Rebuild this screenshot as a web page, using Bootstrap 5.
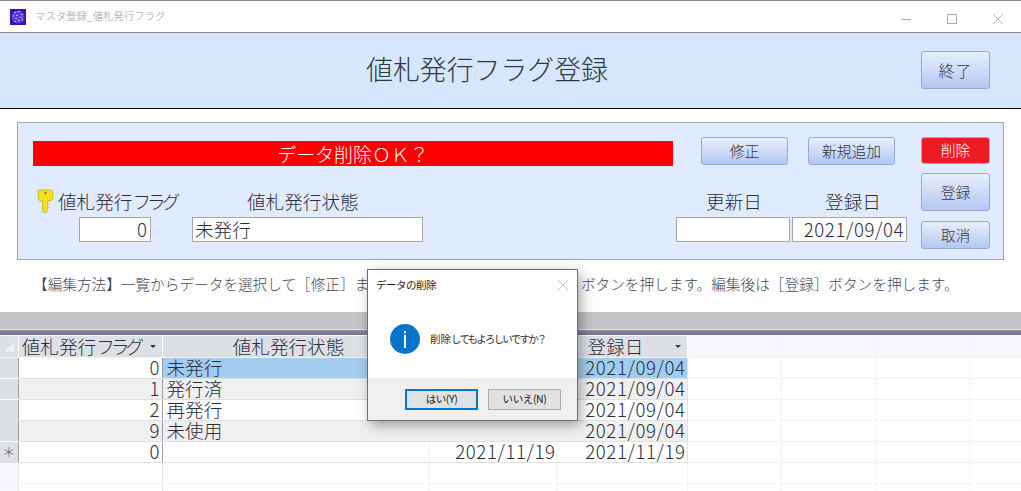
<!DOCTYPE html>
<html lang="ja">
<head>
  <meta charset="utf-8">
  <title>マスタ登録_値札発行フラグ</title>
  <link href="https://cdn.jsdelivr.net/npm/bootstrap@5.3.0/dist/css/bootstrap.min.css" rel="stylesheet">
  <style>
    html, body { height: 491px; overflow: hidden; }
    body { font-family: "Noto Sans CJK JP", "Liberation Sans", sans-serif; font-weight: 300; color: #2b2d3a; background: #fff; position: relative; }

    /* window title bar */
    .win-bar { height: 33px; border-top: 1px solid #8a8a8a; border-bottom: 1px solid #8a8a8a; padding-left: 10px; }
    .win-title { font-size: 10.4px; color: #9a9a9a; margin-left: 9px; line-height: 1; }
    .win-ctrl { width: 46px; }

    /* form header */
    .form-head { height: 76px; background: #d5e6fd; border-bottom: 1px solid #000; padding: 18px 31px 0 0; }
    .form-title { font-size: 26.9px; line-height: 36px; margin-left: 366px; width: 555px; color: #333641; }

    .acc-btn { background: linear-gradient(#e9eefb, #b4c8f3); border: 1px solid #8fa9dc; border-radius: 3px; color: #33353f; font-size: 14.8px; font-weight: 300; padding: 0; line-height: 1; width: 69px; display: flex; align-items: center; justify-content: center; }
    .acc-btn-wide { width: 87px; height: 28px; }
    .acc-btn-next { margin-left: 20px; }
    .acc-btn-danger { background: #ed1c24; border-color: #c9a0b0; color: #fff; height: 27px; }
    .btn-tall { height: 38px; }
    .btn-low { height: 28px; }
    .exit-btn { font-size: 16px; letter-spacing: 1px; }

    /* edit panel */
    .edit-panel { margin: 13px 0 0 17px; width: 987px; height: 138px; background: #e0ecfd; border: 1px solid #a6a6a6; padding: 14px 0 0 15px; }
    .edit-main { width: 874px; }
    .msg-bar { width: 640px; height: 25px; margin: 4px 28px 0 0; background: #f00; color: #fff; font-size: 18.9px; line-height: 25px; text-align: center; }
    .btn-col { width: 69px; margin-left: 14px; gap: 9px; }
    .btn-col .btn-low { margin-top: 1px; }
    .fld-row { margin-top: 23px; }
    .fld-label { font-size: 18.6px; line-height: 24px; white-space: nowrap; }
    .fld-box { height: 25px; background: #fff; border: 1px solid #a6a6a6; font-size: 18.6px; line-height: 22px; padding: 0 2px; margin-top: 4px; }
    .key-cell { width: 118px; }
    .key-icon { margin-left: 3px; }
    .key-box { width: 72px; padding-right: 3px; }
    .status-cell { width: 231px; margin: 0 253px 0 41px; }
    .status-label { margin-left: 55px; }
    .date-cell { width: 114px; }
    .date-cell-last { width: 115px; margin-left: 2px; }
    .upd-label { padding-left: 2px; }
    .reg-label { padding-left: 7px; }
    .kana-tight { letter-spacing: -3.900px; }
    .dt { letter-spacing: .6px; }

    .help-line { margin: 9px 0 0 33px; font-size: 14.65px; line-height: 30px; white-space: nowrap; color: #3f4a55; }
    .help-tight { letter-spacing: -.5px; }

    /* gray band above the datasheet */
    .sheet-band { margin-top: 13px; height: 18px; background: #c3c4c8; border-bottom: 1px solid #e8e8ea; }
    .sheet-rule { height: 6px; background: linear-gradient(#8f8aa8, #76708f); border-bottom: 1px solid #fff; }

    /* datasheet */
    .dsheet { table-layout: fixed; border-collapse: collapse; width: 1021px; font-size: 18.6px; }
    .dsheet th, .dsheet td { height: 21px; padding: 0 2px; line-height: 20px; white-space: nowrap; font-weight: 300; border-right: 1px solid #f2f3f6; border-bottom: 1px solid #f2f3f6; }
    .dsheet td { line-height: 18px; padding-bottom: 2px; }
    .dsheet td.txt { padding-left: 4px; }
    .dsheet td.dt { padding-right: 1px; }
    .dsheet thead th { background: #f5f6fe; }
    .dsheet thead th.hd { background: #dde1e6; border-right: 1px solid #fff; text-align: center; position: relative; }
    .dsheet td.sel { background: #dde1e6; border-right: 1px solid #9a9ea6; border-bottom-color: #fff; padding: 0; text-align: center; font-size: 13px; color: #666; }
    .dsheet .row-alt td { background: #f0f0f0; border-bottom-color: #e0e0e0; }
    .dsheet .row-cur td { background: #a3cdf0; border-bottom-color: #e0e0e0; }
    .dsheet .row-plain td { border-bottom-color: #e0e0e0; }
    .dsheet .row-cur td.key-cur { background: #fff; }
    .dsheet .row-alt td.sel, .dsheet .row-cur td.sel { background: #dde1e6; border-bottom-color: #fff; }
    .dsheet td.col-end { border-right: 1px solid #9a9ea6; }
    .dsheet td.col-last { border-right: 1px solid #e4e4e4; }
    .dsheet .row-alt td.empty, .dsheet .row-cur td.empty, .dsheet .row-plain td.empty { background: #fff; border-bottom-color: #f2f3f6; }
    .dsheet .blank td.sel { background: #f5f6fe; border-right-color: #e4e4e4; border-bottom-color: #f2f3f6; }
    .dsheet .blank td.first { border-right-color: #e4e4e4; }
    .hd-flag { padding-right: 20px !important; }
    .hd-state { padding-right: 16px !important; }
    .hd-reg { padding-right: 15px !important; }
    .drop-arrow { position: absolute; right: 6px; top: 9px; width: 0; height: 0; border-left: 3px solid transparent; border-right: 3px solid transparent; border-top: 3px solid #333; }

    /* message box */
    .msg-dialog { position: absolute; left: 367px; top: 269px; width: 211px; height: 152px; background: #fff; border: 1px solid #6f6f6f; box-shadow: 3px 4px 12px rgba(0,0,0,.35); font-weight: 400; }
    .dlg-title { height: 29px; padding: 0 8px; font-size: 10.5px; color: #222; letter-spacing: -.5px; }
    .dlg-body { height: 79px; padding: 25px 0 0 22px; font-size: 10.5px; color: #333; }
    .dlg-text { margin-left: 10px; line-height: 30px; }
    .dlg-kana { letter-spacing: -1.800px; }
    .dlg-foot { height: 42px; background: #f0f0f0; padding: 11px 16px 0 37px; }
    .dlg-btn { width: 73px; height: 21px; background: #e1e1e1; border: 1px solid #adadad; border-radius: 0; font-size: 10.5px; color: #222; padding: 0; line-height: 1; letter-spacing: -.4px; }
    .dlg-btn-def { border: 2px solid #0078d7; }
  </style>
</head>
<body>

<!-- Title bar -->
<div class="win-bar d-flex align-items-center">
  <svg width="16" height="16" viewBox="0 0 16 16">
    <rect width="16" height="16" fill="#3a0fc0"/>
    <circle cx="8" cy="8" r="6.5" fill="#5a3fd0"/>
    <g fill="#b9a8ee">
      <rect x="4" y="3" width="2" height="1"/><rect x="8" y="2" width="2" height="1"/><rect x="11" y="5" width="2" height="1"/>
      <rect x="3" y="6" width="1" height="2"/><rect x="6" y="6" width="2" height="1"/><rect x="10" y="8" width="2" height="1"/>
      <rect x="5" y="9" width="2" height="1"/><rect x="8" y="11" width="2" height="1"/><rect x="4" y="12" width="2" height="1"/><rect x="12" y="10" width="1" height="2"/>
    </g>
  </svg>
  <span class="win-title flex-grow-1">マスタ登録_値札発行フラグ</span>
  <div class="d-flex align-items-center">
    <div class="win-ctrl text-center"><svg width="12" height="12" viewBox="0 0 12 12"><path d="M1 6.5h10" stroke="#aaa"/></svg></div>
    <div class="win-ctrl text-center"><svg width="12" height="12" viewBox="0 0 12 12"><rect x="1.5" y="1.5" width="9" height="9" fill="none" stroke="#aaa"/></svg></div>
    <div class="win-ctrl text-center"><svg width="12" height="12" viewBox="0 0 12 12"><path d="M1 1l10 10M11 1L1 11" stroke="#bbb"/></svg></div>
  </div>
</div>

<!-- Form header -->
<div class="form-head d-flex">
  <div class="form-title">値札発行フラグ登録</div>
  <button type="button" class="btn acc-btn btn-tall exit-btn">終了</button>
</div>

<!-- Edit panel -->
<div class="edit-panel d-flex">
  <div class="edit-main">
    <div class="d-flex">
      <div class="msg-bar">データ削除ＯＫ？</div>
      <button type="button" class="btn acc-btn acc-btn-wide">修正</button>
      <button type="button" class="btn acc-btn acc-btn-wide acc-btn-next">新規追加</button>
    </div>
    <div class="fld-row d-flex">
      <div class="key-cell">
        <div class="fld-label d-flex align-items-center">
          <svg width="18" height="24" viewBox="0 0 18 24" class="key-icon flex-shrink-0">
            <path d="M2 1h13l2 2v6l-2 3h-3l-.5 2 .8 1-.8 2 .8 1-.8 2-1 3.500H7.500L6.500 21V12H4L2 9z" fill="#f6e11c" stroke="#b89a10" stroke-width=".6"/>
            <circle cx="9.500" cy="4" r="1.200" fill="#8a7a10"/>
          </svg>
          <span class="ms-1"><span>値札発行</span><span class="kana-tight">フラグ</span></span>
        </div>
        <div class="d-flex justify-content-end">
          <div class="fld-box key-box text-end">0</div>
        </div>
      </div>
      <div class="status-cell">
        <div class="fld-label status-label">値札発行状態</div>
        <div class="fld-box">未発行</div>
      </div>
      <div class="date-cell">
        <div class="fld-label text-center upd-label">更新日</div>
        <div class="fld-box"></div>
      </div>
      <div class="date-cell-last">
        <div class="fld-label text-center reg-label">登録日</div>
        <div class="fld-box text-end dt">2021/09/04</div>
      </div>
    </div>
  </div>
  <div class="btn-col d-flex flex-column">
    <button type="button" class="btn acc-btn acc-btn-danger">削除</button>
    <button type="button" class="btn acc-btn btn-tall">登録</button>
    <button type="button" class="btn acc-btn btn-low">取消</button>
  </div>
</div>

<p class="help-line mb-0">【編集方法】一覧からデータを選択して［修正］<span class="help-tight">または［新規追加］または［削除］</span>ボタンを押します。編集後は［登録］ボタンを押します。</p>

<div class="sheet-band"></div>
<div class="sheet-rule"></div>

<!-- Datasheet -->
<table class="dsheet">
  <colgroup>
    <col style="width:18px"><col style="width:144px"><col style="width:267px"><col style="width:128px"><col style="width:130px">
    <col style="width:94px"><col style="width:94px"><col style="width:94px"><col style="width:52px">
  </colgroup>
  <thead>
    <tr>
      <th class="hd"><svg width="14" height="14" viewBox="0 0 14 14" class="d-block"><path d="M2 13L13 2v11z" fill="#eef0f3" stroke="#cfd3d8" stroke-width=".5"/></svg></th>
      <th class="hd hd-flag"><span>値札発行</span><span class="kana-tight">フラグ</span><span class="drop-arrow"></span></th>
      <th class="hd hd-state">値札発行状態</th>
      <th class="hd">更新日<span class="drop-arrow"></span></th>
      <th class="hd hd-reg">登録日<span class="drop-arrow"></span></th>
      <th></th><th></th><th></th><th></th>
    </tr>
  </thead>
  <tbody>
    <tr class="row-cur"><td class="sel"></td><td class="text-end col-end key-cur">0</td><td class="txt">未発行</td><td></td><td class="text-end col-last dt">2021/09/04</td><td class="empty"></td><td class="empty"></td><td class="empty"></td><td class="empty"></td></tr>
    <tr class="row-alt"><td class="sel"></td><td class="text-end col-end">1</td><td class="txt">発行済</td><td></td><td class="text-end col-last dt">2021/09/04</td><td class="empty"></td><td class="empty"></td><td class="empty"></td><td class="empty"></td></tr>
    <tr class="row-plain"><td class="sel"></td><td class="text-end col-end">2</td><td class="txt">再発行</td><td></td><td class="text-end col-last dt">2021/09/04</td><td class="empty"></td><td class="empty"></td><td class="empty"></td><td class="empty"></td></tr>
    <tr class="row-alt"><td class="sel"></td><td class="text-end col-end">9</td><td class="txt">未使用</td><td></td><td class="text-end col-last dt">2021/09/04</td><td class="empty"></td><td class="empty"></td><td class="empty"></td><td class="empty"></td></tr>
    <tr class="row-plain"><td class="sel">＊</td><td class="text-end col-end">0</td><td></td><td class="text-end dt">2021/11/19</td><td class="text-end col-last dt">2021/11/19</td><td class="empty"></td><td class="empty"></td><td class="empty"></td><td class="empty"></td></tr>
    <tr class="blank"><td class="sel"></td><td class="first"></td><td></td><td></td><td></td><td></td><td></td><td></td><td></td></tr>
    <tr class="blank"><td class="sel"></td><td class="first"></td><td></td><td></td><td></td><td></td><td></td><td></td><td></td></tr>
  </tbody>
</table>

<!-- Message box -->
<div class="msg-dialog">
  <div class="dlg-title d-flex align-items-center justify-content-between">
    <span>データの削除</span>
    <svg width="12" height="12" viewBox="0 0 12 12"><path d="M1 1l10 10M11 1L1 11" stroke="#c4c4c4"/></svg>
  </div>
  <div class="dlg-body d-flex align-items-start">
    <svg width="30" height="30" viewBox="0 0 30 30" class="flex-shrink-0">
      <circle cx="15" cy="15" r="15" fill="#0a74c9"/>
      <rect x="14" y="7" width="2" height="2.500" fill="#fff"/>
      <rect x="14" y="11" width="2" height="13" fill="#fff"/>
    </svg>
    <span class="dlg-text">削除<span class="dlg-kana">してもよろしいですか？</span></span>
  </div>
  <div class="dlg-foot d-flex justify-content-between">
    <button type="button" class="btn dlg-btn dlg-btn-def">はい(Y)</button>
    <button type="button" class="btn dlg-btn">いいえ(N)</button>
  </div>
</div>

<script src="https://cdn.jsdelivr.net/npm/bootstrap@5.3.0/dist/js/bootstrap.bundle.min.js"></script>
</body>
</html>
